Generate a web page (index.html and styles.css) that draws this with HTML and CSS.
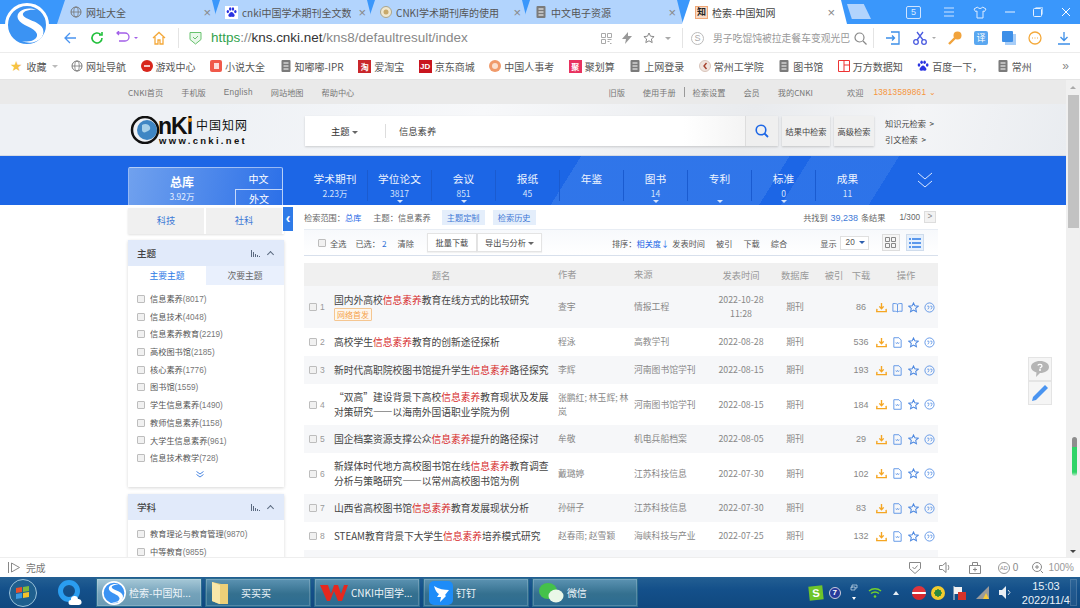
FILE: index.html
```html
<!DOCTYPE html>
<html lang="zh-CN">
<head>
<meta charset="utf-8">
<title>检索-中国知网</title>
<link rel="stylesheet" href="styles.css">
</head>
<body>
<svg class="defs" width="0" height="0">
  <symbol id="i-dl" viewBox="0 0 12 12"><path d="M6 1v6M3.600 4.800 6 7.400l2.400-2.600" fill="none" stroke="#f5a623" stroke-width="1.500"/><path d="M1 7.500 .8 10.500h10.400L11 7.500" fill="none" stroke="#f5a623" stroke-width="1.500"/></symbol>
  <symbol id="i-doc" viewBox="0 0 12 12"><path d="M2 .8h5.500L10 3.300v7.900H2z" fill="none" stroke="#5b93e6"/><path d="M4 6l1 1.500L6 5.500l1 2 1-1.500" fill="none" stroke="#5b93e6" stroke-width=".7"/></symbol>
  <symbol id="i-book" viewBox="0 0 12 12"><path d="M6 2.500C4.800 1.600 2.500 1.500 1 1.800v8.400c1.500-.3 3.800-.2 5 .7 1.200-.9 3.500-1 5-.7V1.800C9.500 1.500 7.200 1.600 6 2.500zM6 2.500v8.400" fill="none" stroke="#5b93e6"/></symbol>
  <symbol id="i-star" viewBox="0 0 12 12"><path d="M6 1l1.500 3.200 3.600.4-2.700 2.400.8 3.600L6 8.800l-3.200 1.800.8-3.600L.9 4.600l3.600-.4z" fill="none" stroke="#4a86e0" stroke-width="1.100"/></symbol>
  <symbol id="i-cite" viewBox="0 0 12 12"><circle cx="6" cy="6" r="5" fill="none" stroke="#5b93e6"/><path d="M3.500 4.500h1.800v1.700L4.200 8M6.800 4.500h1.800v1.700L7.500 8" fill="none" stroke="#5b93e6" stroke-width=".9"/></symbol>
  <symbol id="i-doc-gray" viewBox="0 0 12 12"><rect x="1.500" y="0" width="9" height="12" rx="1" fill="#7b7b7b"/><path d="M3.500 3h5M3.500 6h5M3.500 9h5" stroke="#fff" stroke-width="1"/></symbol>
  <symbol id="i-globe" viewBox="0 0 12 12"><circle cx="6" cy="6" r="5" fill="none" stroke="#777"/><ellipse cx="6" cy="6" rx="2.200" ry="5" fill="none" stroke="#777" stroke-width=".8"/><path d="M1 6h10" stroke="#777" stroke-width=".8"/></symbol>
  <symbol id="i-paw" viewBox="0 0 12 12"><g fill="#2932e1"><ellipse cx="2" cy="5" rx="1.300" ry="1.700"/><ellipse cx="4.600" cy="2.200" rx="1.300" ry="1.800"/><ellipse cx="7.600" cy="2.200" rx="1.300" ry="1.800"/><ellipse cx="10.200" cy="5" rx="1.300" ry="1.700"/><path d="M6 5.500c-1.500 0-2 1.500-3 2.500-1 1.200-.3 3 1.500 2.800 1-.1 2-.4 3 0 1.800.4 2.500-1.600 1.500-2.800-1-1-1.500-2.500-3-2.500z"/></g></symbol>
  <symbol id="i-s" viewBox="0 0 44 44"><circle cx="22" cy="22" r="20.500" fill="#3b93f3" stroke="#fff" stroke-width="3"/><path d="M31 7C22 3 10 8 13 16c3 7 17 8 19 15 1 5-6 9-15 7 11 5 24-2 21-12-3-8-18-9-20-14-1-3 5-6 13-5z" fill="#fff"/></symbol>
</svg>

<div class="logo-s"><svg width="44" height="44"><use href="#i-s"/></svg></div>

<div class="tabbar">
  <div class="tab t1"><svg class="ti"><use href="#i-globe"/></svg><span class="tab-text">网址大全</span><span class="tab-x">×</span></div>
  <div class="tab"><span class="paw-box"><svg class="ti"><use href="#i-paw"/></svg></span><span class="tab-text">cnki中国学术期刊全文数</span><span class="tab-x">×</span></div>
  <div class="tab"><svg class="ti" viewBox="0 0 12 12"><circle cx="6" cy="6" r="5.500" fill="#efe7cf" stroke="#a9a48c"/><circle cx="6" cy="6" r="2.500" fill="#c8a96a"/></svg><span class="tab-text">CNKI学术期刊库的使用</span><span class="tab-x">×</span></div>
  <div class="tab"><svg class="ti"><use href="#i-doc-gray"/></svg><span class="tab-text">中文电子资源</span><span class="tab-x">×</span></div>
  <div class="tab tab-active"><span class="zhi-box">知</span><span class="tab-text">检索-中国知网</span><span class="tab-x">×</span></div>
  <div class="tab-new"></div>
  <div class="win-ctrl">
    <span class="win-s">5</span>
    <svg width="12" height="10" viewBox="0 0 12 10"><path d="M1 1h10M1 5h10M1 9h10" stroke="#cfe4ff"/></svg>
    <svg width="14" height="13" viewBox="0 0 14 13"><path d="M4.500 1 1 3l1.500 2.500L4 5v7h6V5l1.500.5L13 3 9.500 1C9 3 5 3 4.500 1z" fill="none" stroke="#dcebff"/></svg>
    <svg width="10" height="10" viewBox="0 0 10 10"><path d="M0 5h10" stroke="#e6f1ff"/></svg>
    <svg width="10" height="10" viewBox="0 0 10 10"><rect x=".5" y="1.500" width="8" height="8" rx="1" fill="none" stroke="#e6f1ff"/><path d="M2.500 .5h7v7" fill="none" stroke="#e6f1ff" stroke-width=".6"/></svg>
    <svg width="10" height="10" viewBox="0 0 10 10"><path d="M1 1l8 8M9 1l-8 8" stroke="#fff"/></svg>
  </div>
</div>

<div class="toolbar">
  <svg class="tb-back" width="14" height="14" viewBox="0 0 14 14"><path d="M7 2 2 7l5 5M2 7h11" fill="none" stroke="#4a94f0" stroke-width="1.300"/></svg>
  <svg class="tb-ref" width="14" height="14" viewBox="0 0 14 14"><path d="M12 7a5 5 0 1 1-1.500-3.600M12 1v3H9" fill="none" stroke="#22c03c" stroke-width="1.600"/></svg>
  <svg class="tb-undo" width="14" height="14" viewBox="0 0 14 14"><path d="M1 2h8a3.500 3.500 0 0 1 0 8H3M3 0 1 2l2 2" fill="none" stroke="#a25fe8" stroke-width="1.300"/></svg>
  <span class="caret caret-p"></span>
  <svg class="tb-home" width="14" height="14" viewBox="0 0 14 14"><path d="M1 7 7 1.500 13 7M3 6v7h3V9h2v4h3V6" fill="none" stroke="#f4a93b" stroke-width="1.300"/></svg>
  <span class="sep sep-a"></span>
  <svg class="tb-shield" width="13" height="14" viewBox="0 0 13 14"><path d="M1 1.500h11v7L6.500 13 1 8.500z" fill="#e9f8ea" stroke="#68c26e"/><path d="M4 6l2 2 3-3" fill="none" stroke="#68c26e"/></svg>
  <div class="url"><span class="url-g">https</span><span class="url-l">://</span><span class="url-d">kns.cnki.net</span><span class="url-l">/kns8/defaultresult/index</span></div>
  <svg class="tb-qr" width="11" height="11" viewBox="0 0 11 11"><path d="M.5.500h4v4h-4zM6.500.500h4v4h-4zM.5 6.500h4v4h-4zM6.500 6.500h4M6.500 8.500h2M9 10.500h1.500" fill="none" stroke="#aaa"/></svg>
  <svg class="tb-bolt" width="10" height="12" viewBox="0 0 10 12"><path d="M6 0 0 7h4l-1 5 7-8H6z" fill="#999"/></svg>
  <svg class="tb-star" width="12" height="12" viewBox="0 0 12 12"><path d="M6 1l1.500 3.200 3.600.4-2.700 2.400.8 3.600L6 8.800l-3.200 1.800.8-3.600L.9 4.600l3.600-.4z" fill="none" stroke="#888"/></svg>
  <span class="caret caret-g"></span>
  <span class="sep sep-b"></span>
  <span class="search-s">S</span>
  <span class="news">男子吃馄饨被拉走餐车变观光巴</span>
  <svg class="tb-mag" width="13" height="13" viewBox="0 0 13 13"><circle cx="5.500" cy="5.500" r="4.500" fill="none" stroke="#888" stroke-width="1.200"/><path d="M9 9l3.500 3.500" stroke="#888" stroke-width="1.200"/></svg>
  <span class="sep sep-c"></span>
  <svg class="tb-i1" width="14" height="14" viewBox="0 0 14 14"><path d="M5 1h8v12H5M0 7h8M6 4.500 8.500 7 6 9.500" fill="none" stroke="#3d8fe8" stroke-width="1.300"/></svg>
  <svg class="tb-i2" width="14" height="14" viewBox="0 0 14 14"><circle cx="3" cy="11" r="2.300" fill="none" stroke="#4a5be0" stroke-width="1.300"/><circle cx="11" cy="11" r="2.300" fill="none" stroke="#4a5be0" stroke-width="1.300"/><path d="M4 9 10 1M10 9 4 1" stroke="#4a5be0" stroke-width="1.300"/></svg>
  <span class="caret caret-g caret-s"></span>
  <svg class="tb-i3" width="14" height="14" viewBox="0 0 14 14"><circle cx="9.500" cy="4.500" r="4" fill="#f1a33c"/><path d="M7 7 1 13" stroke="#f1a33c" stroke-width="2.400"/></svg>
  <span class="tb-yi">译</span>
  <svg class="tb-i5" width="14" height="14" viewBox="0 0 14 14"><rect x="3" y="3" width="11" height="11" fill="#a7cdf7"/><rect width="11" height="11" rx="1" fill="#3d8fe8"/></svg>
  <svg class="tb-i6" width="14" height="14" viewBox="0 0 14 14"><circle cx="7" cy="7" r="6" fill="none" stroke="#f4a93b" stroke-width="1.300"/><path d="M4 7h1M6.500 7h1M9 7h1" stroke="#f4a93b"/></svg>
  <svg class="tb-i7" width="14" height="14" viewBox="0 0 14 14"><path d="M7 1v8M3.500 6 7 9.500 10.500 6M1 13h12" fill="none" stroke="#3d8fe8" stroke-width="1.300"/></svg>
</div>

<div class="bookmarks">
  <span class="bm bm-fav"><span class="fav-star">★</span>收藏<span class="caret caret-l"></span></span>
  <span class="bm"><svg class="bi"><use href="#i-globe"/></svg>网址导航</span>
  <span class="bm"><svg class="bi" viewBox="0 0 12 12"><circle cx="6" cy="6" r="6" fill="#d8261c"/><path d="M3 6h6" stroke="#fff" stroke-width="1.500"/></svg>游戏中心</span>
  <span class="bm"><svg class="bi" viewBox="0 0 12 12"><rect width="12" height="12" rx="2" fill="#f0594a"/><path d="M4 3h5v6H4z" fill="#fff" opacity=".8"/></svg>小说大全</span>
  <span class="bm"><svg class="bi"><use href="#i-doc-gray"/></svg>知嘟嘟-IPR</span>
  <span class="bm"><span class="bx bx-tao">淘</span>爱淘宝</span>
  <span class="bm"><span class="bx bx-jd">JD</span>京东商城</span>
  <span class="bm"><svg class="bi" viewBox="0 0 12 12"><circle cx="6" cy="6" r="6" fill="#f09a6a"/><circle cx="6" cy="6" r="3" fill="#fbe0cf"/></svg>中国人事考</span>
  <span class="bm"><span class="bx bx-ju">聚</span>聚划算</span>
  <span class="bm"><svg class="bi"><use href="#i-doc-gray"/></svg>上网登录</span>
  <span class="bm"><svg class="bi" viewBox="0 0 12 12"><circle cx="6" cy="6" r="5.500" fill="#f0e4de" stroke="#d8c4ba"/><path d="M7.500 3 5 6l2.500 3" fill="none" stroke="#a5412c" stroke-width="1.400"/></svg>常州工学院</span>
  <span class="bm"><svg class="bi"><use href="#i-doc-gray"/></svg>图书馆</span>
  <span class="bm"><svg class="bi" viewBox="0 0 12 12"><path d="M.5.500h11v11H.5zM6 .5v11M6 5h5.500" fill="none" stroke="#e33"/></svg>万方数据知</span>
  <span class="bm"><svg class="bi"><use href="#i-paw"/></svg>百度一下，</span>
  <span class="bm"><svg class="bi"><use href="#i-doc-gray"/></svg>常州</span>
  <span class="bm-more">»</span>
</div>

<div class="viewport">
  <div class="page">
    <div class="topnav">
      <div class="wrap topnav-in">
        <a>CNKI首页</a><a>手机版</a><a class="en">English</a><a>网站地图</a><a>帮助中心</a>
        <a class="push">旧版</a><a>使用手册</a><i class="bar"></i><a class="tight">检索设置</a><a>会员</a><a>我的CNKI</a><a class="welcome">欢迎</a><a class="user">13813589861 ⌄</a>
      </div>
    </div>
    <header class="head">
      <div class="wrap head-in">
        <div class="brand">
          <svg width="34" height="28" viewBox="0 0 34 28"><circle cx="15" cy="14" r="13" fill="none" stroke="#111" stroke-width="2.500"/><circle cx="17" cy="14" r="10" fill="#3f86c4"/><path d="M12 9c3-2 7-1 8 2s-2 4-4 5-4 0-4-2 0-4 0-5z" fill="#a6cfe9"/></svg>
          <div class="brand-text"><div class="brand-top"><b>nKi</b><span class="dot"></span><span class="brand-cn">中国知网</span></div><div class="brand-url">www.cnki.net</div></div>
        </div>
        <div class="search">
          <span class="search-kind">主题 <i class="caret caret-d"></i></span>
          <span class="search-q">信息素养</span>
          <span class="search-btn"><svg width="14" height="14" viewBox="0 0 14 14"><circle cx="6" cy="6" r="4.800" fill="none" stroke="#1d67e6" stroke-width="1.600"/><path d="M9.500 9.500l3.500 3.500" stroke="#1d67e6" stroke-width="1.800"/></svg></span>
        </div>
        <span class="hbtn hbtn-a">结果中检索</span>
        <span class="hbtn">高级检索</span>
        <div class="hlinks"><a>知识元检索 &nbsp;&gt;</a><a>引文检索 &nbsp;&gt;</a></div>
      </div>
    </header>
    <nav class="dbnav">
      <div class="wrap dbnav-in">
        <div class="zongku">
          <div class="zk-main"><b>总库</b><span>3.92万</span></div>
          <div class="zk-side"><span class="zk-cn">中文</span><span class="zk-en">外文</span></div>
        </div>
        <div class="dbs">
          <div class="db"><b>学术期刊</b><span>2.23万</span></div>
          <div class="db more"><b>学位论文</b><span>3817</span></div>
          <div class="db more"><b>会议</b><span>851</span></div>
          <div class="db"><b>报纸</b><span>45</span></div>
          <div class="db"><b>年鉴</b></div>
          <div class="db more"><b>图书</b><span>14</span></div>
          <div class="db more"><b>专利</b></div>
          <div class="db more"><b>标准</b><span>0</span></div>
          <div class="db"><b>成果</b><span>11</span></div>
        </div>
        <svg class="dbs-chev" width="16" height="17" viewBox="0 0 16 17"><path d="M1 1l7 6 7-6M1 9l7 6 7-6" fill="none" stroke="#d9e7ff"/></svg>
      </div>
    </nav>

    <div class="wrap body">
      <aside class="side">
        <span class="collapse">‹</span>
        <div class="side-tabs"><span>科技</span><span>社科</span></div>
        <section class="card card-1">
          <h3>主题<span class="h-tools"><svg width="9" height="7" viewBox="0 0 9 7"><path d="M.5 0v7M2.500 2v5M4.500 4v3M6.500 5v2M8.500 6v1" stroke="#5b6a80"/></svg><i class="up"></i></span></h3>
          <div class="sub-tabs"><span class="on">主要主题</span><span>次要主题</span></div>
          <ul class="facet">
            <li><i class="chk"></i>信息素养<em>(8017)</em></li>
            <li><i class="chk"></i>信息技术<em>(4048)</em></li>
            <li><i class="chk"></i>信息素养教育<em>(2219)</em></li>
            <li><i class="chk"></i>高校图书馆<em>(2185)</em></li>
            <li><i class="chk"></i>核心素养<em>(1776)</em></li>
            <li><i class="chk"></i>图书馆<em>(1559)</em></li>
            <li><i class="chk"></i>学生信息素养<em>(1490)</em></li>
            <li><i class="chk"></i>教师信息素养<em>(1158)</em></li>
            <li><i class="chk"></i>大学生信息素养<em>(961)</em></li>
            <li><i class="chk"></i>信息技术教学<em>(728)</em></li>
          </ul>
          <svg class="expand" width="8" height="7" viewBox="0 0 8 7"><path d="M.5.500 4 3 7.500.500M.5 3.500 4 6l3.500-2.500" fill="none" stroke="#4a86e0"/></svg>
        </section>
        <section class="card card-2">
          <h3>学科<span class="h-tools"><svg width="9" height="7" viewBox="0 0 9 7"><path d="M.5 0v7M2.500 2v5M4.500 4v3M6.500 5v2M8.500 6v1" stroke="#5b6a80"/></svg><i class="up"></i></span></h3>
          <ul class="facet">
            <li><i class="chk"></i>教育理论与教育管理<em>(9870)</em></li>
            <li><i class="chk"></i>中等教育<em>(9855)</em></li>
          </ul>
        </section>
      </aside>

      <main class="results">
        <div class="crumb">
          <span>检索范围：<b>总库</b></span><span class="c-topic">主题：信息素养</span>
          <a class="ctag">主题定制</a><a class="ctag">检索历史</a>
          <span class="c-count">共找到 <b>39,238</b> 条结果</span><span class="c-page">1/300</span><span class="c-next">&gt;</span>
        </div>
        <div class="rtools">
          <i class="chk"></i><span class="r-all">全选</span><span class="r-sel">已选：<b>2</b></span><span class="r-clr">清除</span>
          <span class="rbtn rbtn-a">批量下载</span><span class="rbtn rbtn-b">导出与分析 <i class="caret caret-d"></i></span>
          <span class="sort">排序：<b>相关度↓</b></span><span class="s1">发表时间</span><span class="s2">被引</span><span class="s2">下载</span><span class="s2">综合</span>
          <span class="show">显示</span><span class="sel">20 <i class="caret caret-b"></i></span>
          <span class="vw"><svg width="11" height="11" viewBox="0 0 11 11"><path d="M.5.500h4v4h-4zM6.500.500h4v4h-4zM.5 6.500h4v4h-4zM6.500 6.500h4v4h-4z" fill="none" stroke="#888"/></svg></span>
          <span class="vw vw-on"><svg width="12" height="10" viewBox="0 0 12 10"><path d="M0 1h2M3 1h9M0 5h2M3 5h9M0 9h2M3 9h9" stroke="#2e7be6" stroke-width="1.300"/></svg></span>
        </div>
        <div class="row thead"><span></span><span class="th-title">题名</span><span>作者</span><span>来源</span><span class="ctr">发表时间</span><span class="ctr">数据库</span><span class="ctr th-cite">被引</span><span class="ctr">下载</span><span class="ctr">操作</span></div>

        <div class="row r42 alt"><span class="n"><i class="chk"></i>1</span><span class="t">国内外高校<mark>信息素养</mark>教育在线方式的比较研究<br><em class="tag">网络首发</em></span><span>查宇</span><span>情报工程</span><span class="ctr">2022-10-28<br>11:28</span><span class="ctr">期刊</span><span></span><span class="num">86</span><span class="ops"><svg><use href="#i-dl"/></svg><svg><use href="#i-book"/></svg><svg><use href="#i-star"/></svg><svg><use href="#i-cite"/></svg></span></div>
        <div class="row r28"><span class="n"><i class="chk"></i>2</span><span class="t">高校学生<mark>信息素养</mark>教育的创新途径探析</span><span>程泳</span><span>高教学刊</span><span class="ctr">2022-08-28</span><span class="ctr">期刊</span><span></span><span class="num">536</span><span class="ops"><svg><use href="#i-dl"/></svg><svg><use href="#i-doc"/></svg><svg><use href="#i-star"/></svg><svg><use href="#i-cite"/></svg></span></div>
        <div class="row r28 alt"><span class="n"><i class="chk"></i>3</span><span class="t">新时代高职院校图书馆提升学生<mark>信息素养</mark>路径探究</span><span>李辉</span><span>河南图书馆学刊</span><span class="ctr">2022-08-15</span><span class="ctr">期刊</span><span></span><span class="num">193</span><span class="ops"><svg><use href="#i-dl"/></svg><svg><use href="#i-doc"/></svg><svg><use href="#i-star"/></svg><svg><use href="#i-cite"/></svg></span></div>
        <div class="row r41"><span class="n"><i class="chk"></i>4</span><span class="t">“双高”建设背景下高校<mark>信息素养</mark>教育现状及发展对策研究——以海南外国语职业学院为例</span><span>张鹏红; 林玉辉; 林岚</span><span>河南图书馆学刊</span><span class="ctr">2022-08-15</span><span class="ctr">期刊</span><span></span><span class="num">184</span><span class="ops"><svg><use href="#i-dl"/></svg><svg><use href="#i-doc"/></svg><svg><use href="#i-star"/></svg><svg><use href="#i-cite"/></svg></span></div>
        <div class="row r28 alt"><span class="n"><i class="chk"></i>5</span><span class="t">国企档案资源支撑公众<mark>信息素养</mark>提升的路径探讨</span><span>牟敬</span><span>机电兵船档案</span><span class="ctr">2022-08-05</span><span class="ctr">期刊</span><span></span><span class="num">29</span><span class="ops"><svg><use href="#i-dl"/></svg><svg><use href="#i-doc"/></svg><svg><use href="#i-star"/></svg><svg><use href="#i-cite"/></svg></span></div>
        <div class="row r41"><span class="n"><i class="chk"></i>6</span><span class="t">新媒体时代地方高校图书馆在线<mark>信息素养</mark>教育调查分析与策略研究——以常州高校图书馆为例</span><span>戴璐婷</span><span>江苏科技信息</span><span class="ctr">2022-07-30</span><span class="ctr">期刊</span><span></span><span class="num">102</span><span class="ops"><svg><use href="#i-dl"/></svg><svg><use href="#i-doc"/></svg><svg><use href="#i-star"/></svg><svg><use href="#i-cite"/></svg></span></div>
        <div class="row r28 alt"><span class="n"><i class="chk"></i>7</span><span class="t">山西省高校图书馆<mark>信息素养</mark>教育发展现状分析</span><span>孙研子</span><span>江苏科技信息</span><span class="ctr">2022-07-30</span><span class="ctr">期刊</span><span></span><span class="num">83</span><span class="ops"><svg><use href="#i-dl"/></svg><svg><use href="#i-doc"/></svg><svg><use href="#i-star"/></svg><svg><use href="#i-cite"/></svg></span></div>
        <div class="row r28"><span class="n"><i class="chk"></i>8</span><span class="t">STEAM教育背景下大学生<mark>信息素养</mark>培养模式研究</span><span>赵春雨; 赵雪颖</span><span>海峡科技与产业</span><span class="ctr">2022-07-25</span><span class="ctr">期刊</span><span></span><span class="num">132</span><span class="ops"><svg><use href="#i-dl"/></svg><svg><use href="#i-doc"/></svg><svg><use href="#i-star"/></svg><svg><use href="#i-cite"/></svg></span></div>
        <div class="row r28 alt"></div>
      </main>
    </div>

    <div class="float-tools">
      <span class="ft"><svg width="18" height="16" viewBox="0 0 18 16"><path d="M9 0c5 0 9 2.500 9 6s-4 6-9 6l-4 4 .5-4.500C2 10.500 0 8.500 0 6c0-3.500 4-6 9-6z" fill="#b5b5b5"/><circle cx="9" cy="9" r="1" fill="#fff"/><path d="M6.800 4.500C7.500 3 11 3 11 5c0 1.200-2 1.300-2 2.500" fill="none" stroke="#fff" stroke-width="1.200"/></svg></span>
      <span class="ft"><svg width="18" height="18" viewBox="0 0 18 18"><path d="M14 1l3 3L5 16l-4 1 1-4z" fill="#4a94f0"/></svg></span>
    </div>
  </div>
  <div class="scroll">
    <span class="sc-up"></span>
    <span class="sc-thumb"></span>
    <span class="sc-mark"></span>
    <span class="sc-down"></span>
  </div>
</div>

<div class="status">
  <svg class="st-play" width="12" height="11" viewBox="0 0 12 11"><path d="M.5 0v11M3.500 1v9l8-4.500z" fill="none" stroke="#888"/></svg>
  <span class="st-done">完成</span>
  <svg class="st-r1" width="12" height="13" viewBox="0 0 12 13"><path d="M.5 1.500h11v6L6 12.500.5 7.500z" fill="none" stroke="#888"/><path d="M3.500 6l2 2 3-3.500" fill="none" stroke="#888"/></svg>
  <svg class="st-r" width="12" height="11" viewBox="0 0 12 11"><path d="M.5 3.500h3L7 .5v10l-3.500-3h-3zM9 3c1 1.500 1 3.500 0 5" fill="none" stroke="#888"/></svg>
  <svg class="st-r" width="12" height="12" viewBox="0 0 12 12"><path d="M.5 3.500h11v8H.5zM3.500 3.500V.5h5v3M6 5.500v4M4 7.500h4" fill="none" stroke="#888"/></svg>
  <span class="st-ad">AD</span><span class="st-zero">0</span>
  <svg class="st-zoom" width="11" height="11" viewBox="0 0 11 11"><circle cx="5" cy="5" r="4.500" fill="none" stroke="#888"/><path d="M3 5h4M5 3v4M8.500 8.500 11 11" stroke="#888"/></svg>
  <span class="st-pct">100%</span>
</div>

<div class="taskbar">
  <span class="orb"><svg width="28" height="28" viewBox="0 0 28 28"><circle cx="14" cy="14" r="13.500" fill="#1f5f8e" stroke="#9cc3da"/><path d="M7 9l6-1v5l-6 1z" fill="#e8502c"/><path d="M14 8l6-1v5l-6 1z" fill="#7db83a"/><path d="M7 15l6-1v5l-6 1z" fill="#3d9ae0"/><path d="M14 14l6-1v5l-6 1z" fill="#f5c22a"/></svg></span>
  <span class="qq"><svg width="26" height="26" viewBox="0 0 26 26"><circle cx="12" cy="11" r="8.500" fill="none" stroke="#2a9df0" stroke-width="5"/><path d="M14 20a3.500 3.500 0 0 1 7-1 3 3 0 0 1 1 6h-8a2.500 2.500 0 0 1 0-5z" fill="#fff"/></svg></span>
  <div class="tk tk-on"><svg width="24" height="24"><use href="#i-s"/></svg><span>检索-中国知...</span></div>
  <div class="tk"><svg width="18" height="26" viewBox="0 0 18 26"><path d="M1 2l9 2 7 0v20l-9 0-7-3z" fill="#eccf78"/><path d="M1 2l8 3v19l-8-3z" fill="#f8e7a9"/></svg><span class="tk-pad">买买买</span></div>
  <div class="tk"><svg width="28" height="20" viewBox="0 0 28 20"><path d="M0 2l8 0 3 9 3-9 4 0 3 9L24 2h4l-6 16h-4l-4-10-4 10H7z" fill="#e5281f"/></svg><span>CNKI中国学...</span></div>
  <div class="tk"><svg width="24" height="24" viewBox="0 0 24 24"><rect width="24" height="24" rx="5" fill="#1d8cf8"/><path d="M5 5c5 3 10 4 15 4l-4 5 1 1-6 6 1-5H8l2-3c-2-1-4-4-5-8z" fill="#fff"/></svg><span>钉钉</span></div>
  <div class="tk"><svg width="26" height="22" viewBox="0 0 26 22"><ellipse cx="10" cy="9" rx="9" ry="8" fill="#45c14a"/><ellipse cx="18" cy="14" rx="7.500" ry="6.500" fill="#eaf7e8"/></svg><span>微信</span></div>
  <div class="tray">
    <span class="tr-s">S</span>
    <span class="tr-q">7</span>
    <span class="tr-w"><svg width="8" height="18" viewBox="0 0 8 18"><path d="M2 4V1h5v3H5M1 3h4v3H1z" fill="none" stroke="#cfe0ee" stroke-width=".7"/><path d="M2 13h4l-2 3z" fill="#fff"/></svg></span>
    <svg class="tr-i" width="14" height="11" viewBox="0 0 14 11"><path d="M1 4c3.500-3 8.500-3 12 0M3 6.500c2.500-2 5.500-2 8 0" fill="none" stroke="#74d02c" stroke-width="1.500"/><circle cx="7" cy="9.500" r="1.300" fill="#74d02c"/></svg>
    <span class="tr-up"></span>
    <span class="tr-red"></span>
    <span class="tr-yel"></span>
    <svg class="tr-i" width="13" height="14" viewBox="0 0 13 14"><path d="M1 0v14" stroke="#ddd"/><path d="M1 1h8v7H1z" fill="#f2f2f2"/><rect x="5" y="6" width="8" height="8" fill="#d6332a"/></svg>
    <svg class="tr-i" width="13" height="13" viewBox="0 0 13 13"><path d="M0 13 13 0v13z" fill="#9a9a9a"/><path d="M7 13l3-6 3 6z" fill="#f7c938"/></svg>
    <svg class="tr-i" width="12" height="13" viewBox="0 0 12 13"><path d="M0 4h3l4-4v13L3 9H0z" fill="#e8edf2"/><path d="M9 4l2 2.500L9 9" fill="none" stroke="#cfdbe5"/></svg>
    <div class="clock"><span>15:03</span><span>2022/11/4</span></div>
    <span class="show-desk"></span>
  </div>
</div>
</body>
</html>
```

FILE: styles.css
```css
* { box-sizing: border-box; }
html, body { margin: 0; padding: 0; }
body {
  width: 1080px; height: 608px; overflow: hidden; position: relative;
  display: flex; flex-direction: column;
  font-family: "Noto Sans CJK SC", "Liberation Sans", sans-serif;
  font-size: 8.2px; color: #555; background: #fff;
}
a { color: inherit; text-decoration: none; }
i, em { font-style: normal; }
ul { list-style: none; margin: 0; padding: 0; }
h3 { margin: 0; }
.defs { position: absolute; }

/* app logo */
.logo-s { position: absolute; left: 5px; top: 3px; width: 44px; height: 44px; z-index: 5; }

/* carets */
.caret { display: inline-block; width: 0; height: 0; border-left: 3px solid transparent; border-right: 3px solid transparent; border-top: 3px solid #999; vertical-align: middle; }
.caret-p { border-top-color: #a25fe8; margin-left: 4px; border-width: 2.500px 2.500px 0; }
.caret-g { border-top-color: #aaa; margin-left: 10px; }
.caret-s { margin-left: 5px; border-width: 2.500px 2.500px 0; }
.caret-l { border-top-color: #bbb; margin-left: 2px; }
.caret-d { border-top-color: #666; }
.caret-b { border-top-color: #2e5fae; margin-left: 2px; }

/* tabs */
.tabbar { height: 24px; flex: none; display: flex; background: #3a97fb; padding-left: 57px; }
.tab {
  width: 161px; height: 24px; margin-right: -6px; padding: 0 7px 0 13px;
  display: flex; align-items: center; gap: 4px; background: #b2d4fd;
  clip-path: polygon(8px 0, calc(100% - 6px) 0, 100% 100%, 0 100%);
  font-size: 10px; color: #555;
}
.tab-text { flex: 1; white-space: nowrap; overflow: hidden; font-size: 10px; }
.tab-x { color: #888; font-size: 13px; font-family: "Liberation Sans", sans-serif; margin-left: 3px; }
.ti { width: 12px; height: 12px; flex: none; }
.paw-box { width: 13px; height: 13px; background: #fff; display: flex; align-items: center; justify-content: center; }
.paw-box .ti { width: 11px; height: 11px; }
.tab-active { width: 165px; padding-right: 12px; background: #fff; color: #444; position: relative; margin-left: 5px; margin-right: 0; }
.zhi-box { width: 13px; height: 13px; background: #f8d9c5; border: 1px solid #f0a878; color: #222; font-size: 9px; line-height: 11px; text-align: center; font-family: "Liberation Serif", "Noto Sans CJK SC", serif; font-weight: 700; }
.tab-new { width: 24px; height: 15px; margin: 4px 0 0 0; background: #b2d4fd; clip-path: polygon(0 0, 70% 0, 100% 100%, 20% 100%); }
.win-ctrl { margin-left: auto; display: flex; align-items: center; gap: 18px; padding-right: 9px; height: 24px; }
.win-s { width: 15px; height: 13px; border: 1px solid #cfe4ff; border-radius: 2px; color: #dcebff; font: 9px/11px "Liberation Sans", sans-serif; text-align: center; margin-right: 4px; }

/* toolbar */
.toolbar { height: 28px; flex: none; display: flex; align-items: center; background: #fff; padding-left: 63px; }
.tb-ref { margin-left: 13px; }
.tb-undo { margin-left: 12px; }
.tb-home { margin-left: 14px; }
.sep { width: 1px; height: 20px; background: #e4e4e4; }
.sep-a { margin-left: 12px; }
.tb-shield { margin-left: 10px; }
.url { width: 390px; margin-left: 9px; font: 13.470px/16px "Liberation Sans", sans-serif; white-space: nowrap; }
.url-g { color: #31a24c; }
.url-l { color: #888; }
.url-d { color: #333; }
.tb-bolt { margin-left: 10px; }
.tb-star { margin-left: 11px; }
.sep-b { margin-left: 11px; }
.search-s { width: 13px; height: 13px; margin-left: 8px; border: 1px solid #bbb; border-radius: 50%; font: 9px/11px "Liberation Sans", sans-serif; color: #aaa; text-align: center; }
.news { width: 138px; margin-left: 9px; font-size: 9.800px; color: #999; white-space: nowrap; overflow: hidden; }
.tb-mag { margin-left: 3px; }
.sep-c { margin-left: 6px; }
.tb-i1 { margin-left: 12px; }
.tb-i2 { margin-left: 13px; }
.tb-i3 { margin-left: 12px; }
.tb-yi { width: 14px; height: 14px; margin-left: 12px; background: #5aa7f0; color: #fff; font-size: 9px; line-height: 14px; text-align: center; border-radius: 2px; }
.tb-i5 { margin-left: 14px; }
.tb-i6 { margin-left: 12px; }
.tb-i7 { margin-left: 15px; }

/* bookmarks */
.bookmarks { height: 28px; flex: none; display: flex; align-items: center; gap: 14.500px; padding-left: 10px; background: #fff; border-top: 1px solid #ececec; border-bottom: 1px solid #e4e4e4; font-size: 10px; color: #555; white-space: nowrap; }
.bm { display: inline-flex; align-items: center; gap: 3px; }
.bm-fav { margin-right: -1px; }
.fav-star { color: #f6c243; font-size: 14px; line-height: 14px; font-family: "DejaVu Sans", sans-serif; margin-right: 1px; }
.bi { width: 12px; height: 12px; flex: none; }
.bx { width: 13px; height: 13px; color: #fff; font-size: 8px; line-height: 13px; text-align: center; font-weight: 700; }
.bx-tao { background: #c9262b; }
.bx-jd { background: #c9151e; font-family: "Liberation Sans", sans-serif; }
.bx-ju { background: #e8325f; }
.bm-more { margin-left: auto; margin-right: 11px; color: #888; font-size: 12px; font-family: "Liberation Sans", sans-serif; }

/* viewport */
.viewport { height: 477px; flex: none; display: flex; position: relative; overflow: hidden; }
.page { width: 1066px; flex: none; position: relative; overflow: hidden; }
.wrap { width: 810px; margin: 0 auto; }
.scroll { width: 14px; flex: none; background: #f0f0f0; display: flex; flex-direction: column; align-items: center; position: relative; }
.sc-up { margin-top: 6px; width: 0; height: 0; border-left: 3px solid transparent; border-right: 3px solid transparent; border-bottom: 3px solid #aaa; }
.sc-thumb { width: 11px; height: 133px; margin-top: 6px; background: #c2c2c2; }
.sc-mark { width: 5px; height: 39px; margin: 209px 0 0 3px; border-radius: 3px; background: linear-gradient(#8d8d8d 0 26%, #2fd467 26% 90%, #c5ecd2); }
.sc-down { margin-top: 74px; width: 0; height: 0; border-left: 3px solid transparent; border-right: 3px solid transparent; border-top: 3px solid #444; }

/* top nav */
.topnav { height: 24px; background: #eaeaea; }
.topnav-in { height: 24px; display: flex; align-items: center; gap: 18px; color: #777; white-space: nowrap; }
.topnav .en { font-family: "Liberation Sans", sans-serif; letter-spacing: .3px; }
.push { margin-left: auto; }
.bar { width: 1px; height: 10px; background: #999; margin: 0 -15px 0 -10px; }
.tight { margin-left: 5px; }
.welcome { margin-left: 16px; }
.user { color: #f6953c; margin-left: -8px; font-family: "Liberation Sans", sans-serif; margin-right: 2px; letter-spacing: .25px; }

/* header */
.head { height: 52px; background: linear-gradient(105deg, #eef1f5 0 20%, #f7f8fa 45%, #e9ebee 70%, #f4f5f7 85%, #e9ecf0); border-bottom: 1px solid #d6dbe4; }
.head-in { display: flex; align-items: flex-start; padding-top: 12px; }
.brand { width: 177px; height: 30px; padding-left: 2px; display: flex; color: #111; }
.brand-text { margin-left: -6px; }
.brand-top { height: 20px; display: flex; align-items: center; line-height: 20px; }
.brand-top b { font: 700 23px/20px "Liberation Sans", sans-serif; letter-spacing: -1px; }
.dot { width: 4px; height: 4px; border-radius: 50%; background: #f39a1e; margin: -12px 0 0 -4px; }
.brand-cn { font-family: "Liberation Serif", "Noto Sans CJK SC", serif; font-size: 12px; margin-left: 4px; letter-spacing: 1px; white-space: nowrap; }
.brand-url { font: 700 9.500px/9px "Liberation Sans", sans-serif; letter-spacing: 2.300px; margin-left: 1px; white-space: nowrap; }
.search { width: 473px; height: 30px; display: flex; align-items: center; background: linear-gradient(90deg, #fff 0 80%, #eee); box-shadow: 0 1px 2px rgba(0,0,0,.16); color: #444; font-size: 9.300px; }
.search-kind { width: 81px; padding-left: 26px; border-right: 1px solid #ddd; color: #333; }
.search-q { margin-left: 13px; }
.search-btn { margin-left: auto; width: 33px; height: 30px; display: flex; align-items: center; justify-content: center; background: #efefef; border-left: 1px solid #ddd; }
.hbtn { width: 40px; height: 30px; margin-left: 4px; background: #f0f0f0; box-shadow: 0 1px 2px rgba(0,0,0,.18); text-align: center; line-height: 30px; color: #444; white-space: nowrap; }
.hbtn-a { width: 48px; }
.hlinks { margin-left: 11px; display: flex; flex-direction: column; gap: 4px; line-height: 12px; color: #444; padding-top: 1px; white-space: nowrap; }

/* db nav */
.dbnav { height: 49px; background:
  linear-gradient(122deg, transparent 0 53%, rgba(90,150,240,.32) 53% 72%, transparent 72% 74%, rgba(90,150,240,.28) 74% 82%, transparent 82%), #1c66e6; color: #fff; }
.dbnav-in { height: 49px; display: flex; position: relative; }
.zongku { width: 155px; height: 38px; margin-top: 11px; margin-right: 20px; display: flex; border: 1px solid rgba(255,255,255,.5); border-bottom: 0; border-radius: 2px 2px 0 0; background: linear-gradient(100deg, #70a1ee, #2c70e8); }
.zk-main { flex: 1; display: flex; flex-direction: column; align-items: center; padding-top: 6px; }
.zk-main b { font-size: 12px; line-height: 16px; }
.zk-main span { font-size: 8.500px; line-height: 13px; color: #e6efff; }
.zk-side { width: 47px; display: flex; flex-direction: column; font-size: 10px; text-align: center; }
.zk-cn { height: 22px; line-height: 21px; }
.zk-en { height: 16px; line-height: 18px; border: 1px solid rgba(255,255,255,.7); border-width: 1px 0 0 1px; }
.dbs { display: flex; padding-top: 14px; }
.db { width: 64px; height: 31px; display: flex; flex-direction: column; align-items: center; position: relative; border-left: 1px solid #1a5bd0; }
.db:first-child { border-left: 0; }
.db b { font-weight: 400; font-size: 10.700px; line-height: 18px; color: #eef4ff; }
.db span { font-size: 8.500px; line-height: 11px; color: #d5e3fb; }
.db.more::after { content: ""; position: absolute; left: 29px; top: 30px; border-left: 3px solid transparent; border-right: 3px solid transparent; border-top: 3px solid #d5e3fb; }
.dbs-chev { margin: 16px 0 0 38px; }

/* body */
.body { display: flex; gap: 20px; align-items: flex-start; }
.side { width: 156px; position: relative; padding-top: 3px; flex: none; }
.collapse { position: absolute; left: 155px; top: 2px; width: 10px; height: 24px; background: #2f7be8; color: #fff; text-align: center; font: 700 14px/22px "Liberation Sans", sans-serif; }
.side-tabs { display: flex; gap: 2px; height: 26px; box-shadow: 0 1px 2px rgba(0,0,0,.12); }
.side-tabs span { width: 76px; background: #f0f0f0; text-align: center; line-height: 25px; color: #3f79d6; font-size: 9.300px; }
.card { background: #fff; box-shadow: 0 1px 3px rgba(0,0,0,.16); }
.card-1 { margin-top: 6px; height: 247px; position: relative; }
.card-2 { margin-top: 7px; height: 80px; }
.card h3 { height: 26px; padding: 0 9px 0 9px; background: #e1eafa; color: #444; font-size: 9.600px; line-height: 26px; font-weight: 500; display: flex; align-items: center; justify-content: space-between; }
.h-tools { display: flex; align-items: center; gap: 5px; }
.up { width: 5px; height: 5px; border-left: 1px solid #5b6a80; border-top: 1px solid #5b6a80; transform: rotate(45deg); margin: 3px 2px 0 3px; }
.sub-tabs { display: flex; height: 19px; line-height: 19px; text-align: center; font-size: 8.800px; }
.sub-tabs span { flex: 1; background: #e9f0fd; color: #666; }
.sub-tabs .on { background: #fff; color: #2e7be6; }
.chk { display: inline-block; width: 8px; height: 8px; background: #f1f1f1; border: 1px solid #bdbdbd; border-radius: 1px; flex: none; }
.facet { padding: 5px 0 0 9px; }
.card-2 .facet { padding-top: 5px; }
.facet li { height: 17.700px; line-height: 17.700px; display: flex; align-items: baseline; gap: 5px; color: #555; white-space: nowrap; font-size: 8.200px; }
.facet .chk { align-self: center; }
.facet em { margin-left: -5px; color: #777; font-family: "Liberation Sans", sans-serif; }
.expand { display: block; margin: 4px auto 0; position: relative; left: -6px; }

/* results */
.results { width: 634px; flex: none; }
.crumb { height: 24px; display: flex; align-items: center; color: #666; white-space: nowrap; }
.crumb b { color: #1d67e6; font-weight: 400; }
.c-topic { margin-left: 12px; }
.ctag { height: 15px; width: 43px; margin-left: 11px; background: #e4eefb; color: #3f79d6; line-height: 15px; text-align: center; }
.ctag + .ctag { margin-left: 8px; }
.c-count { margin-left: auto; }
.c-count b { color: #3f79d6; font-weight: 400; font-family: "Liberation Sans", sans-serif; font-size: 9px; margin: 0 1px; }
.c-page { margin-left: 14px; font-family: "Liberation Sans", sans-serif; }
.c-next { width: 12px; height: 12px; margin: 0 2px 0 4px; border: 1px solid #ddd; background: #f2f2f2; text-align: center; line-height: 10px; color: #888; font-family: "Liberation Sans", sans-serif; }
.rtools { height: 27px; display: flex; align-items: center; background: linear-gradient(#f7f9fc, #fff); border: 1px solid #e8edf4; border-bottom-color: #d8e0ec; border-width: 1px 0; padding-left: 14px; color: #555; white-space: nowrap; }
.r-all { margin-left: 4px; }
.r-sel { margin-left: 9px; }
.r-sel b { color: #2e6fd6; font-weight: 400; margin: 0 2px; }
.r-clr { margin-left: 9px; }
.rbtn { height: 19px; background: #fff; border: 1px solid #e4e4e4; line-height: 17px; text-align: center; color: #444; box-shadow: 0 1px 1px rgba(0,0,0,.05); }
.rbtn-a { width: 50px; margin-left: 13px; }
.rbtn-b { width: 65px; }
.sort { margin-left: 70px; }
.sort b { color: #1d67e6; font-weight: 400; }
.s1 { margin-left: 3px; }
.s2 { margin-left: 11px; }
.show { margin-left: 33px; }
.sel { width: 29px; height: 14px; margin-left: 3px; border: 1px solid #e0e0e0; background: #fff; line-height: 12px; padding-left: 5px; font-family: "Liberation Sans", sans-serif; }
.vw { width: 18px; height: 17px; margin-left: 13px; display: flex; align-items: center; justify-content: center; border: 1px solid #ddd; background: #f6f6f6; }
.vw-on { margin-left: 6px; background: #e6f0fc; border-color: #cfdcec; }

.row { display: grid; grid-template-columns: 30px 224px 76px 70px 74px 34px 36px 26px 64px; align-items: center; color: #888; font-size: 8.800px; }
.thead { height: 23px; margin-top: 7px; background: #f0f0f0; color: #999; font-size: 9.300px; }
.th-title { text-align: center; padding-right: 10px; }
.th-cite { padding-left: 8px; }
.ctr { text-align: center; }
.r28 { height: 28px; }
.r41 { height: 41px; }
.r42 { height: 42px; }
.alt { background: #f6f7f9; }
.n { display: flex; align-items: center; gap: 2px; padding-left: 5px; font-family: "Liberation Sans", sans-serif; font-size: 8.500px; color: #999; }
.n .chk { margin-right: 1px; }
.t { color: #444; font-size: 9.750px; line-height: 14.200px; padding-right: 4px; }
.t mark { background: none; color: #d62a2a; }
.tag { display: inline-block; height: 13px; margin-top: 1px; padding: 0 2px; border: 1px solid #f5c691; border-radius: 1px; background: #fdf6ec; color: #f5a24b; font-size: 8px; line-height: 11px; vertical-align: top; }
.row > span:nth-child(3), .row > span:nth-child(4) { line-height: 13.500px; padding-right: 3px; }
.row .ctr { line-height: 14px; }
.num { text-align: center; font-family: "Liberation Sans", sans-serif; font-size: 9px; color: #888; }
.ops { display: flex; gap: 5px; padding-left: 1.500px; }
.ops svg { width: 11px; height: 11px; flex: none; }

/* floats */
.float-tools { position: absolute; left: 1028px; top: 277px; display: flex; flex-direction: column; width: 24px; }
.ft { height: 24px; display: flex; align-items: center; justify-content: center; background: #f5f5f5; border: 1px solid #e4e4e4; }
.ft + .ft { margin-top: 0; }

/* status */
.status { height: 20px; flex: none; display: flex; align-items: center; background: #fff; border-top: 1px solid #eee; color: #888; }
.st-play { margin-left: 8px; }
.st-done { margin-left: 6px; font-size: 9.800px; color: #777; }
.st-r1 { margin-left: auto; }
.st-r { margin-left: 18px; }
.st-ad { margin-left: 17px; width: 12px; height: 12px; border: 1px solid #999; border-radius: 50%; font: 5.500px/10px "Liberation Sans", sans-serif; text-align: center; }
.st-zero { margin-left: 3px; font: 10px "Liberation Sans", sans-serif; }
.st-zoom { margin-left: 14px; }
.st-pct { margin: 0 6px 0 5px; font: 10px "Liberation Sans", sans-serif; color: #999; }

/* taskbar */
.taskbar { height: 31px; flex: none; display: flex; align-items: center; background: linear-gradient(#235f93, #14508a 40%, #10487f); color: #eef5fa; }
.orb { width: 28px; height: 28px; margin-left: 9px; }
.qq { width: 26px; height: 26px; margin: 0 13px 0 20px; }
.tk { width: 107px; height: 29px; margin-right: 2.500px; display: flex; align-items: center; gap: 3px; padding-left: 5px; background: linear-gradient(#5c93b2, #34708f 55%, #2c6c92); border: 1px solid #2a6c8f; box-shadow: inset 0 0 0 1px rgba(255,255,255,.18); font-size: 10px; white-space: nowrap; }
.tk-on { background: linear-gradient(#a6c8d7, #74a2ba 55%, #6a9ab4); }
.tk-pad { margin-left: 9px; }
.tray { flex: 1; display: flex; align-items: center; padding-left: 168px; position: relative; }
.tr-s { width: 14px; height: 14px; background: #6fc52a; color: #fff; font: 700 11px/14px "Liberation Sans", sans-serif; text-align: center; transform: rotate(-6deg); }
.tr-q { width: 12px; height: 12px; margin-left: 6px; border-radius: 50%; background: #263a9c; border: 1px solid #ccd; color: #fff; font: 700 8px/10px "Liberation Sans", sans-serif; text-align: center; }
.tr-w { margin-left: 9px; height: 18px; }
.tr-i { margin-left: 10px; flex: none; }
.tr-up { margin-left: 11px; width: 0; height: 0; border-left: 3.500px solid transparent; border-right: 3.500px solid transparent; border-bottom: 4px solid #e6eef5; }
.tr-red { width: 14px; height: 14px; margin-left: 13px; border-radius: 50%; background: linear-gradient(#e0353c 0 42%, #fff 42% 58%, #d5282f 58%); }
.tr-yel { width: 14px; height: 14px; margin-left: 5px; margin-right: -2px; border-radius: 50%; background: radial-gradient(circle, #2b8a3e 0 35%, #f2cc2e 38%); }
.clock { display: flex; flex-direction: column; align-items: center; margin-left: 11px; font: 11px/14px "Liberation Sans", sans-serif; color: #e9f1f8; white-space: nowrap; }
.show-desk { width: 7px; height: 27px; margin-left: auto; margin-right: 3px; border: 1px solid rgba(255,255,255,.15); background: rgba(255,255,255,.06); }
```
